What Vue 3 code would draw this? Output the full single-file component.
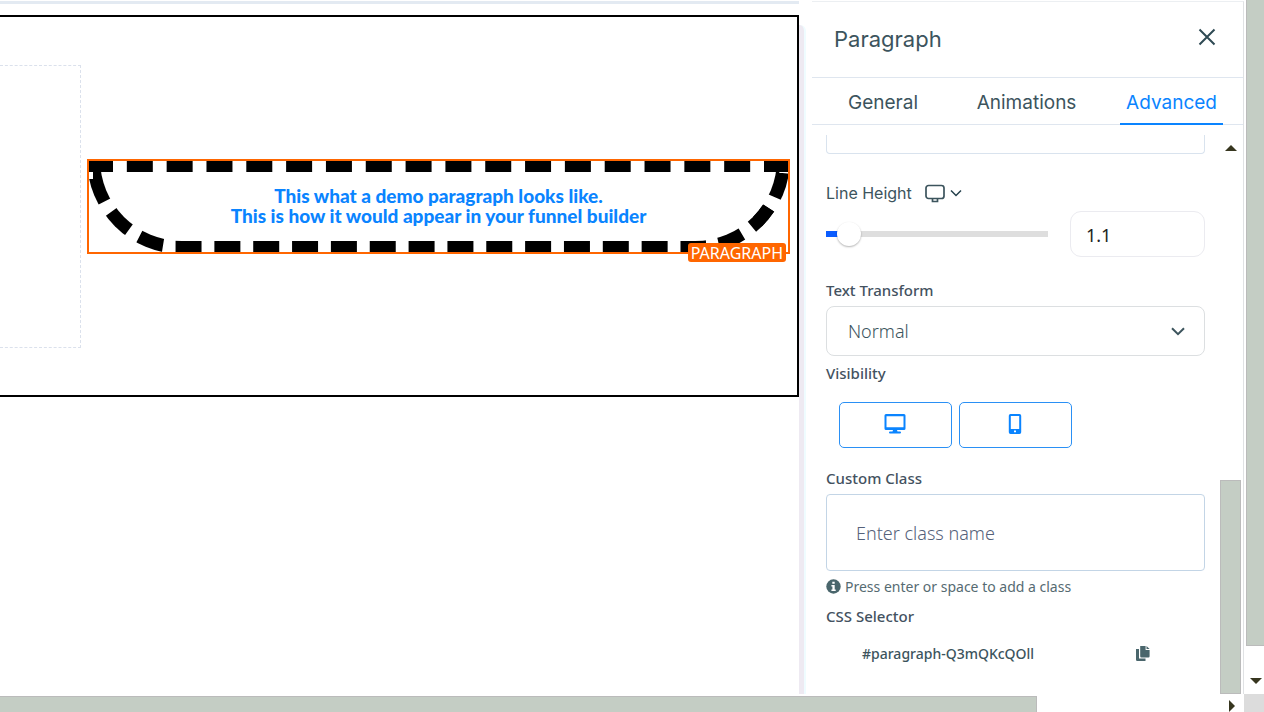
<script setup>
import { ref } from 'vue'

const tabs = ['General', 'Animations', 'Advanced']
const activeTab = ref('Advanced')
const lineHeight = ref('1.1')
const textTransform = ref('Normal')
const customClass = ref('')
</script>

<template>
  <div class="window">
    <div class="workspace">
      <main class="canvas">
        <section class="section">
          <div class="empty-column"></div>
          <div class="paragraph">
            <p>This what a demo paragraph looks like.<br />This is how it would appear in your funnel builder</p>
            <span class="badge">PARAGRAPH</span>
          </div>
        </section>
      </main>
      <div class="splitter"></div>
      <aside class="panel">
        <header class="panel-header">
          <h2>Paragraph</h2>
          <button class="icon-button" aria-label="Close">
            <svg width="18" height="18" viewBox="0 0 18 18"><path d="M1.5 1.5 16.5 16.5M16.5 1.5 1.5 16.5" fill="none" stroke="#2f4a54" stroke-width="2" /></svg>
          </button>
        </header>
        <nav class="tabs">
          <button v-for="t in tabs" :key="t" :class="{ active: t === activeTab }" @click="activeTab = t">{{ t }}</button>
        </nav>
        <div class="panel-body">
          <div class="fields">
            <div class="field-end"></div>
            <div class="line-height-head">
              <label for="lh">Line Height</label>
              <button class="icon-button device" aria-label="Device">
                <svg width="20" height="19" viewBox="0 0 20 19" fill="none" stroke="#3c545d" stroke-width="1.7"><rect x="1" y="1.5" width="18" height="13" rx="2.5" /><path d="M7.5 14.5v3h5v-3" /></svg>
                <svg width="12" height="8" viewBox="0 0 12 8"><path d="M1 1.5 6 6.5 11 1.5" fill="none" stroke="#24404c" stroke-width="1.5" /></svg>
              </button>
            </div>
            <div class="line-height-row">
              <input id="lh" v-model="lineHeight" class="slider" type="range" min="0" max="20" step="0.1" />
              <input v-model="lineHeight" class="number" type="text" aria-label="Line height value" />
            </div>
            <label class="label" for="tt">Text Transform</label>
            <div class="select-wrap">
              <select id="tt" v-model="textTransform">
                <option>Normal</option>
                <option>Uppercase</option>
                <option>Lowercase</option>
              </select>
              <svg width="14" height="9" viewBox="0 0 14 9"><path d="M1 1.2 7 7.2 13 1.2" fill="none" stroke="#3c545d" stroke-width="2" /></svg>
            </div>
            <div class="label visibility-label">Visibility</div>
            <div class="visibility">
              <button aria-label="Desktop">
                <svg width="22" height="20" viewBox="0 0 22 20" fill="#0a84ff"><path fill-rule="evenodd" d="M2 0h18a1.5 1.5 0 0 1 1.5 1.500v13A1.500 1.500 0 0 1 20 16h-7l.5 1.500H16q1 0 1 1t-1 1H6q-1 0-1-1t1-1h2.500L9 16H2A1.500 1.500 0 0 1 .5 14.500v-13A1.500 1.500 0 0 1 2 0ZM2.500 2.300v10.900h17V2.300Z" /></svg>
              </button>
              <button aria-label="Mobile">
                <svg width="14" height="20" viewBox="0 0 14 20" fill="#0a84ff"><path fill-rule="evenodd" d="M2.500 0h9A1.700 1.700 0 0 1 13.200 1.700v16.600A1.700 1.700 0 0 1 11.500 20h-9A1.700 1.700 0 0 1 .8 18.300V1.700A1.700 1.700 0 0 1 2.500 0ZM2.800 2v13h8.400V2ZM6 16.500v1.800h2v-1.800Z" /></svg>
              </button>
            </div>
            <label class="label" for="cc">Custom Class</label>
            <input id="cc" v-model="customClass" class="class-input" type="text" placeholder="Enter class name" />
            <div class="hint">
              <svg width="15" height="15" viewBox="0 0 15 15"><circle cx="7.500" cy="7.500" r="7.200" fill="#4a666c" /><path d="M6.300 2.800h2.400v2H6.300ZM5.400 6h3.300v4.500h1v1.500H5.400v-1.500h1v-3h-1Z" fill="#fff" /></svg>
              <span>Press enter or space to add a class</span>
            </div>
            <div class="label">CSS Selector</div>
            <div class="selector">
              <span>#paragraph-Q3mQKcQOll</span>
              <button class="icon-button" aria-label="Copy selector">
                <svg width="14" height="16" viewBox="0 0 14 16" fill="#4a666c"><path d="M0 3h3v9.500h6.500V15H1.200Q0 15 0 13.800ZM4.200 0H9.600V4H13.600V10.300Q13.600 11.500 12.400 11.500H5.400Q4.200 11.500 4.200 10.300ZM10.500 0 13.600 3.100H10.500Z" /></svg>
              </button>
            </div>
          </div>
          <div class="inner-scroll">
            <svg width="12" height="6" viewBox="0 0 12 6"><path d="M6 0 12 6H0Z" fill="#37361f" /></svg>
            <div class="thumb"></div>
          </div>
        </div>
      </aside>
    </div>
    <div class="outer-v">
      <div class="thumb"></div>
      <svg width="12" height="6" viewBox="0 0 12 6"><path d="M0 0H12L6 6Z" fill="#37361f" /></svg>
    </div>
    <div class="outer-h">
      <div class="thumb"></div>
      <svg width="6" height="12" viewBox="0 0 6 12"><path d="M0 0 6 6 0 12Z" fill="#37361f" /></svg>
    </div>
    <div class="corner"></div>
  </div>
</template>

<style>
body {
  margin: 0;
  background: #fff;
}
</style>

<style scoped>
* {
  box-sizing: border-box;
}
button,
input,
select {
  font: inherit;
  color: inherit;
  margin: 0;
}
svg {
  display: block;
}
.window {
  display: grid;
  grid-template-columns: minmax(0, 1fr) 20px;
  grid-template-rows: minmax(0, 1fr) 18px;
  height: 100vh;
  overflow: hidden;
  color: #3c545d;
  font-family: "Noto Sans", "Open Sans", sans-serif;
}
.workspace {
  display: flex;
  min-width: 0;
  min-height: 0;
}
.canvas {
  flex: 1;
  min-width: 0;
  padding-top: 11px;
  margin-top: 1px;
  border-top: 3px solid #e3eaf2;
}
.section {
  display: flex;
  align-items: center;
  gap: 6px;
  padding: 48px 7px 47px 0;
  border: 2px solid #000;
  border-left: 0;
}
.empty-column {
  width: 81px;
  height: 283px;
  border: 1px dashed #dbe1ec;
  border-left: 0;
}
.paragraph {
  position: relative;
  flex: 1;
  border: 13px dashed #000;
  border-radius: 0 0 100px 100px;
}
.paragraph::after {
  content: "";
  position: absolute;
  inset: -13px;
  border: 2px solid #ff6600;
}
.paragraph p {
  margin: 0;
  padding: 14px 0 15px;
  text-align: center;
  font: 900 19px/20px Lato, sans-serif;
  color: #0a84ff;
}
.badge {
  position: absolute;
  z-index: 1;
  right: -9px;
  bottom: -21px;
  padding: 1px 3px 0;
  border-radius: 3px;
  background: #ff6600;
  color: #fff;
  font-size: 16px;
  line-height: 18px;
}
.splitter {
  width: 7px;
  margin: 25px 6px 0 0;
  background: #eeeaf2;
  border-right: 2px solid #effcff;
  border-top-right-radius: 6px;
}
.panel {
  display: flex;
  flex-direction: column;
  width: 432px;
  margin-top: 1px;
  border-top: 1px solid #eceff2;
  border-right: 1px solid #e0e2e4;
}
.panel-header {
  display: flex;
  justify-content: space-between;
  height: 76px;
  padding: 22px 27px 0 22px;
  border-bottom: 1px solid #dfe6ef;
}
h2 {
  margin: 0;
  font: 400 22px/30px Inter, sans-serif;
}
.icon-button {
  border: 0;
  padding: 0;
  background: none;
}
.panel-header .icon-button {
  height: 26px;
}
.tabs {
  display: flex;
  justify-content: space-between;
  height: 47px;
  padding: 0 20px 0 30px;
  border-bottom: 1px solid #dfe6ef;
}
.tabs button {
  height: 47px;
  padding: 4px 6px 0;
  border: 0;
  border-bottom: 2px solid transparent;
  background: none;
  font: 400 19px/24px Inter, sans-serif;
}
.tabs button:nth-child(2) {
  margin-left: 9px;
}
.tabs .active {
  color: #0a84ff;
  border-color: #0a84ff;
}
.panel-body {
  display: flex;
  flex: 1;
  min-height: 0;
  margin-top: 10px;
}
.fields {
  flex: 1;
  min-width: 0;
  padding: 0 15px 0 14px;
}
.field-end {
  height: 19px;
  border: 1px solid #d9e3ee;
  border-top: 0;
  border-radius: 0 0 4px 4px;
}
.line-height-head {
  display: flex;
  align-items: center;
  height: 24px;
  margin-top: 27px;
  gap: 13px;
  font: 400 16px/24px Inter, sans-serif;
}
.device {
  display: flex;
  align-items: center;
  gap: 5px;
}
.line-height-row {
  display: flex;
  align-items: center;
  gap: 22px;
  margin: 6px 0 22px;
}
.slider {
  appearance: none;
  flex: 1;
  min-width: 0;
  height: 24px;
  border-radius: 3px;
  background: linear-gradient(#0a5cff, #0a5cff) left center / 20px 6px no-repeat,
    linear-gradient(#dedede, #dedede) center / 100% 6px no-repeat;
}
.slider::-webkit-slider-thumb {
  appearance: none;
  width: 24px;
  height: 24px;
  border-radius: 50%;
  background: #fff;
  box-shadow: 0 1px 2px rgba(0, 0, 0, 0.3);
}
.number {
  width: 135px;
  height: 46px;
  padding: 1px 15px 0;
  border: 1px solid #ebebf0;
  border-radius: 11px;
  font-size: 18px;
  color: #222;
}
.label {
  display: block;
  font-size: 15px;
  font-weight: 500;
  line-height: 22px;
  color: #44525f;
}
.select-wrap {
  display: grid;
  align-items: center;
  margin-top: 5px;
}
.select-wrap > * {
  grid-area: 1 / 1;
}
.select-wrap svg {
  justify-self: end;
  margin-right: 20px;
  pointer-events: none;
}
select {
  appearance: none;
  width: 100%;
  height: 50px;
  padding: 0 21px;
  border: 1px solid #dcdfe1;
  border-radius: 8px;
  background: #fff;
  font-size: 18px;
  font-weight: 300;
}
.visibility-label {
  margin-top: 6px;
}
.visibility {
  display: flex;
  gap: 7px;
  margin: 18px 0 19px 13px;
}
.visibility button {
  display: grid;
  place-items: center;
  width: 113px;
  height: 46px;
  padding: 0 1px 2px 0;
  border: 1px solid #2a90f5;
  border-radius: 5px;
  background: #fff;
}
.class-input {
  display: block;
  width: 100%;
  height: 77px;
  margin-top: 5px;
  padding: 0 29px;
  border: 1px solid #c3d5e6;
  border-radius: 4px;
  font-size: 18px;
  font-weight: 300;
}
.class-input::placeholder {
  color: #55617a;
  opacity: 1;
}
.hint {
  display: flex;
  align-items: center;
  gap: 4px;
  height: 22px;
  margin: 4px 0 8px;
  font-size: 14px;
  font-weight: 400;
  color: #566b72;
}
.selector {
  display: flex;
  align-items: center;
  justify-content: space-between;
  margin-top: 16px;
  padding: 0 55px 0 36px;
  font-size: 14px;
  font-weight: 500;
  line-height: 22px;
}
.inner-scroll {
  display: flex;
  flex-direction: column;
  justify-content: space-between;
  align-items: center;
  width: 23px;
  padding: 10px 2px 0 0;
}
.thumb {
  background: #c4cdc4;
  border: 1px solid #bbb;
}
.inner-scroll .thumb {
  width: 21px;
  height: 214px;
}
.outer-v {
  display: flex;
  flex-direction: column;
  justify-content: space-between;
  align-items: center;
  padding: 0 0 10px 2px;
}
.outer-v .thumb {
  width: 18px;
  height: 646px;
  border-top: 0;
  border-right: 0;
}
.outer-v svg {
  margin-left: 2px;
}
.outer-h {
  display: flex;
  align-items: center;
  justify-content: space-between;
  padding: 2px 9px 0 0;
}
.outer-h .thumb {
  width: 84%;
  height: 16px;
  border-left: 0;
  border-bottom: 0;
}
.outer-h svg {
  margin-top: 4px;
}
.corner {
  background: #dcdcdc;
}
</style>
